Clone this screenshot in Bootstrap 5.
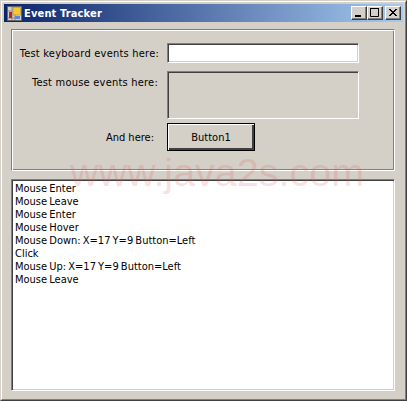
<!DOCTYPE html>
<html lang="en">
<head>
  <meta charset="UTF-8">
  <meta name="viewport" content="width=device-width, initial-scale=1.0">
  <title>Event Tracker</title>
  <link href="https://cdn.jsdelivr.net/npm/bootstrap@5.3.0/dist/css/bootstrap.min.css" rel="stylesheet">
  <style>
    body { margin: 0; background: #d4d0c8; }
    .win-frame {
      position: relative; width: 407px; height: 401px; background: #d4d0c8; color: #000;
      font: 11px/13px "DejaVu Sans Condensed", "DejaVu Sans", sans-serif;
      border: 1px solid; border-color: #d4d0c8 #404040 #404040 #d4d0c8;
    }
    .win-inner {
      height: 100%; padding: 2px;
      border: 1px solid; border-color: #fff #808080 #808080 #fff;
    }
    .title-bar {
      height: 18px; padding: 0 2px 0 3px; color: #fff; font-weight: 700; letter-spacing: .15px;
      background: linear-gradient(90deg, #0a246a, #a6caf0);
    }
    .title-bar > svg { margin-right: 2px; }
    .cap-btn {
      width: 16px; height: 14px; background: #d4d0c8;
      border: 1px solid; border-color: #fff #404040 #404040 #fff;
      box-shadow: inset -1px -1px 0 #808080;
    }
    .cap-gap { margin-left: 2px; }
    .group-frame {
      width: 384px; height: 142px; margin: 7px 0 8px 7px; padding: 13px 0 0 7px;
      border: 1px solid; border-color: #808080 #fff #fff #808080;
      box-shadow: inset 1px 1px 0 #fff, inset -1px -1px 0 #808080;
    }
    .lbl-cell { width: 140px; padding-right: 0; letter-spacing: .22px; }
    .field-text, .field-panel {
      width: 192px; margin-left: 8px; padding: 0 3px; border-radius: 0; background: #fff;
      border: 1px solid; border-color: #808080 #fff #fff #808080;
      box-shadow: inset 1px 1px 0 #404040, inset -1px -1px 0 #d4d0c8;
    }
    .field-text { height: 20px; font: inherit; }
    .field-panel { height: 48px; background: #d4d0c8; box-shadow: inset 1px 1px 0 #404040; }
    .mouse-row { margin-top: 8px; }
    .mouse-row .lbl-cell { padding-top: 5px; padding-right: 1px; }
    .btn-row { margin-top: 4px; }
    .btn-row .lbl-cell { padding-right: 5px; letter-spacing: 0; }
    .win-btn {
      width: 88px; height: 28px; margin-left: 8px; padding: 0; border-radius: 0;
      font: inherit; color: #000; background: #d4d0c8;
      border: 1px solid #000;
      box-shadow: inset 1px 1px 0 #fff, inset -2px -2px 0 #404040;
    }
    .event-list {
      width: 384px; height: 212px; margin: 0 0 0 7px; padding: 2px 3px; word-spacing: -1px;
      list-style: none; background: #fff;
      border: 1px solid; border-color: #808080 #fff #fff #808080;
      box-shadow: inset 1px 1px 0 #404040, inset -1px -1px 0 #d4d0c8;
    }
    .stamp {
      position: absolute; left: 69px; top: 151px; pointer-events: none;
      font: 39.5px/40px "Liberation Sans", Arial, sans-serif; color: rgba(225, 90, 90, .2);
    }
  </style>
</head>
<body>
  <div class="win-frame">
    <div class="win-inner">
      <div class="title-bar d-flex align-items-center">
        <svg width="15" height="15" viewBox="0 0 15 15">
          <rect x=".5" y=".5" width="14" height="14" fill="#d4d0c8" stroke="#666"/>
          <path d="M5 1v13M1 5h4M1 12h12M8 9v5" stroke="#8a8a8a" fill="none"/>
          <rect x="6" y="1.5" width="7.5" height="7.5" fill="#f8c830" stroke="#a08020" stroke-width=".5"/>
          <rect x="2" y="6" width="3" height="6" fill="#c82020"/>
          <rect x="8" y="10" width="5" height="3" fill="#5a8ae0"/>
        </svg>
        <span class="flex-grow-1">Event Tracker</span>
        <div class="cap-btn d-flex justify-content-center">
          <svg width="14" height="12" viewBox="0 0 14 12"><rect x="3" y="8" width="6" height="2" fill="#000"/></svg>
        </div>
        <div class="cap-btn d-flex justify-content-center">
          <svg width="14" height="12" viewBox="0 0 14 12"><path d="M2.5 1.5h8v8h-8z M2 1.5h9" fill="none" stroke="#000"/></svg>
        </div>
        <div class="cap-btn cap-gap d-flex justify-content-center">
          <svg width="14" height="12" viewBox="0 0 14 12"><path d="M3 2l7 7M4 2l7 7M10 2l-7 7M11 2l-7 7" stroke="#000" fill="none"/></svg>
        </div>
      </div>
      <div class="group-frame">
        <div class="d-flex align-items-center">
          <label class="lbl-cell text-end">Test keyboard events here:</label>
          <input class="field-text form-control" type="text">
        </div>
        <div class="mouse-row d-flex align-items-start">
          <div class="lbl-cell text-end">Test mouse events here:</div>
          <div class="field-panel"></div>
        </div>
        <div class="btn-row d-flex align-items-center">
          <div class="lbl-cell text-end">And here:</div>
          <button class="win-btn btn" type="button">Button1</button>
        </div>
      </div>
      <ul class="event-list">
        <li>Mouse Enter</li>
        <li>Mouse Leave</li>
        <li>Mouse Enter</li>
        <li>Mouse Hover</li>
        <li>Mouse Down: X=17 Y=9 Button=Left</li>
        <li>Click</li>
        <li>Mouse Up: X=17 Y=9 Button=Left</li>
        <li>Mouse Leave</li>
      </ul>
    </div>
    <div class="stamp">www.java2s.com</div>
  </div>
  <script src="https://cdn.jsdelivr.net/npm/bootstrap@5.3.0/dist/js/bootstrap.bundle.min.js"></script>
</body>
</html>
